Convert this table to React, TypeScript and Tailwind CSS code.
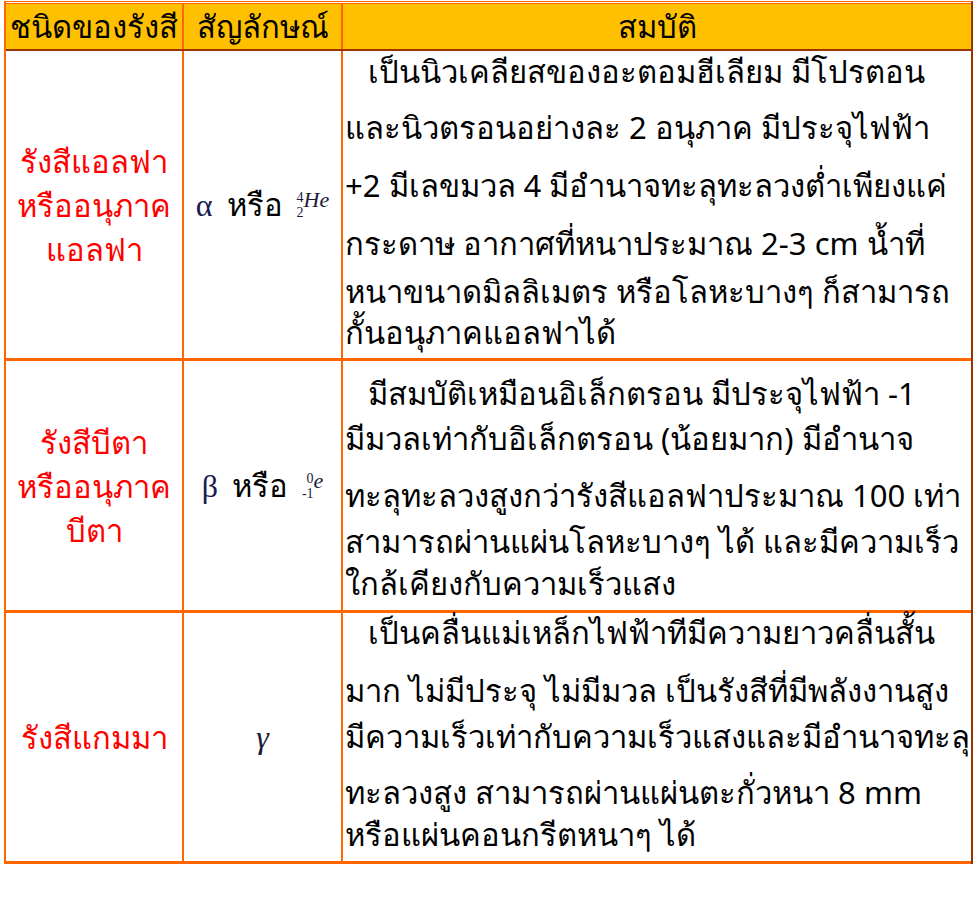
const border = 'border-[#ff6600]'

type Row = {
  name: string[]
  symbol: 'alpha' | 'beta' | 'gamma'
  lines: { text: string; mt: string }[]
  height: string
  pad: string
}

const rows: Row[] = [
  {
    name: ['รังสีแอลฟา', 'หรืออนุภาค', 'แอลฟา'],
    symbol: 'alpha',
    height: 'h-[310px]',
    pad: 'pt-[2px]',
    lines: [
      { text: 'เป็นนิวเคลียสของอะตอมฮีเลียม มีโปรตอน', mt: 'mt-0 pl-[23px]' },
      { text: 'และนิวตรอนอย่างละ 2 อนุภาค มีประจุไฟฟ้า', mt: 'mt-[20px]' },
      { text: '+2 มีเลขมวล 4 มีอำนาจทะลุทะลวงต่ำเพียงแค่', mt: 'mt-[22px]' },
      { text: 'กระดาษ อากาศที่หนาประมาณ 2-3 cm น้ำที่', mt: 'mt-[22px]' },
      { text: 'หนาขนาดมิลลิเมตร หรือโลหะบางๆ ก็สามารถ', mt: 'mt-[12px]' },
      { text: 'กั้นอนุภาคแอลฟาได้', mt: 'mt-[5px]' },
    ],
  },
  {
    name: ['รังสีบีตา', 'หรืออนุภาค', 'บีตา'],
    symbol: 'beta',
    height: 'h-[252px]',
    pad: 'pt-[14px]',
    lines: [
      { text: 'มีสมบัติเหมือนอิเล็กตรอน มีประจุไฟฟ้า -1', mt: 'mt-0 pl-[23px]' },
      { text: 'มีมวลเท่ากับอิเล็กตรอน (น้อยมาก) มีอำนาจ', mt: 'mt-[9px]' },
      { text: 'ทะลุทะลวงสูงกว่ารังสีแอลฟาประมาณ 100 เท่า', mt: 'mt-[21px]' },
      { text: 'สามารถผ่านแผ่นโลหะบางๆ ได้ และมีความเร็ว', mt: 'mt-[10px]' },
      { text: 'ใกล้เคียงกับความเร็วแสง', mt: 'mt-[6px]' },
    ],
  },
  {
    name: ['รังสีแกมมา'],
    symbol: 'gamma',
    height: 'h-[251px]',
    pad: 'pt-[1px]',
    lines: [
      { text: 'เป็นคลื่นแม่เหล็กไฟฟ้าทีมีความยาวคลื่นสั้น', mt: 'mt-0 pl-[23px]' },
      { text: 'มาก ไม่มีประจุ ไม่มีมวล เป็นรังสีที่มีพลังงานสูง', mt: 'mt-[22px]' },
      { text: 'มีความเร็วเท่ากับความเร็วแสงและมีอำนาจทะลุ', mt: 'mt-[10px]' },
      { text: 'ทะลวงสูง สามารถผ่านแผ่นตะกั่วหนา 8 mm', mt: 'mt-[20px]' },
      { text: 'หรือแผ่นคอนกรีตหนาๆ ได้', mt: 'mt-[6px]' },
    ],
  },
]

function Symbol({ kind }: { kind: Row['symbol'] }) {
  const serif = { fontFamily: '"Liberation Serif", "DejaVu Serif", serif' }
  if (kind === 'gamma') {
    return (
      <span className="text-[32px] italic text-[#1b1b3a]" style={serif}>
        γ
      </span>
    )
  }
  return (
    <div className="flex items-center gap-[14px]">
      <span className="text-[32px] text-[#1b1b4f]" style={serif}>
        {kind === 'alpha' ? 'α' : 'β'}
      </span>
      <span className="text-[31px] text-black">หรือ</span>
      {kind === 'alpha' ? (
        <span className="flex items-center text-[#1b1b3a]" style={serif}>
          <span className="flex flex-col items-center text-[14px] leading-[15px]">
            <span>4</span>
            <span>2</span>
          </span>
          <span className="-mt-[10px] text-[22px] italic">He</span>
        </span>
      ) : (
        <span className="flex items-center text-[#1b1b3a]" style={serif}>
          <span className="flex flex-col items-end text-[14px] leading-[15px]">
            <span>0</span>
            <span>-1</span>
          </span>
          <span className="-mt-[10px] text-[22px] italic">e</span>
        </span>
      )}
    </div>
  )
}

export default function App() {
  return (
    <div
      className="min-h-[923px] w-[978px] bg-white pt-[1px] pl-[4px]"
      style={{ fontFamily: '"Noto Sans", "DejaVu Sans", sans-serif' }}
    >
      <div className={`w-[969px] border-t border-l-2 ${border} border-r-2 border-r-[#993300] pt-[1px]`}>
        {/* header */}
        <div className="grid grid-cols-[178px_159px_1fr] border-t border-[#ff6600] bg-[#ffc000] border-b-2 border-b-[#993300]">
          <div className={`flex h-[45px] items-center justify-center border-r-2 ${border} text-[31px] leading-[45px] text-black whitespace-nowrap`}>
            ชนิดของรังสี
          </div>
          <div className={`flex h-[45px] items-center justify-center border-r-2 ${border} text-[31px] leading-[45px] text-black whitespace-nowrap`}>
            สัญลักษณ์
          </div>
          <div className="flex h-[45px] items-center justify-center text-[31px] leading-[45px] text-black">สมบัติ</div>
        </div>

        {rows.map((row, i) => (
          <div
            key={i}
            className={`grid grid-cols-[178px_159px_1fr] border-b-[3px] ${border} ${row.height}`}
          >
            <div className={`flex flex-col items-center justify-center border-r-2 ${border} text-[31px] leading-[44px] text-[#ff0000]`}>
              {row.name.map((n) => (
                <span key={n} className="whitespace-nowrap">
                  {n}
                </span>
              ))}
            </div>
            <div className={`flex items-center justify-center border-r-2 ${border}`}>
              <Symbol kind={row.symbol} />
            </div>
            <div className={`flex flex-col pl-[2px] ${row.pad}`}>
              {row.lines.map((l) => (
                <div key={l.text} className={`h-[36px] whitespace-nowrap text-[31px] leading-[36px] text-black ${l.mt}`}>
                  {l.text}
                </div>
              ))}
            </div>
          </div>
        ))}
      </div>
    </div>
  )
}
